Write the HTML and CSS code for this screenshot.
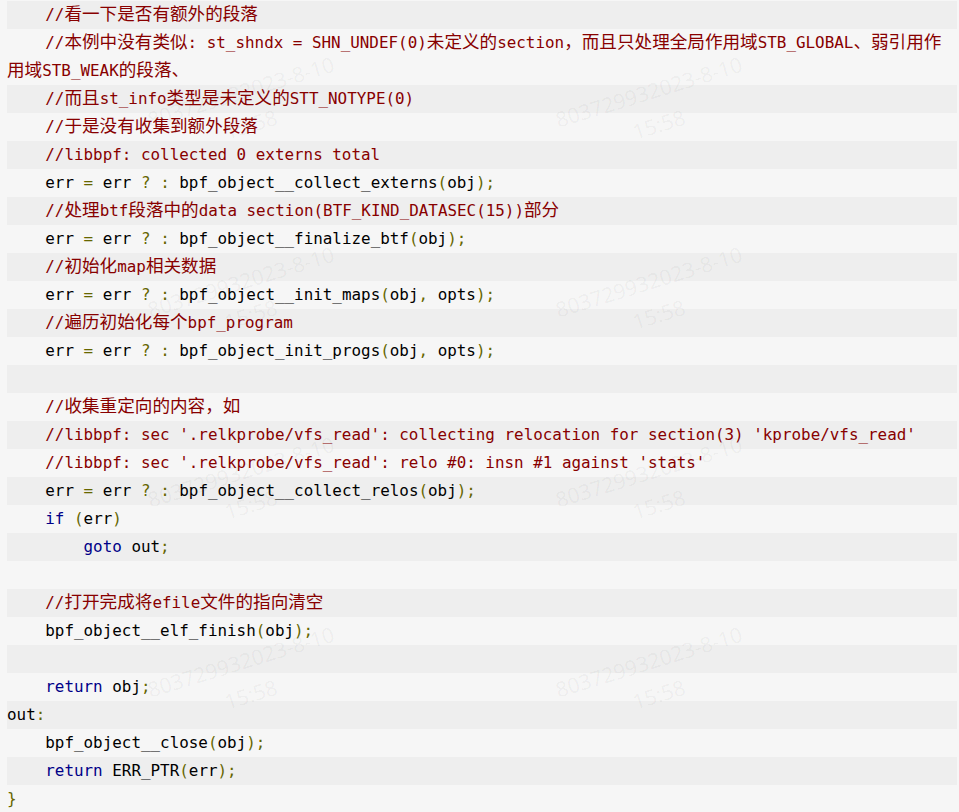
FILE: index.html
```html
<!DOCTYPE html>
<html lang="zh">
<head>
<meta charset="utf-8">
<title>bpf_object__open</title>
<link rel="stylesheet" href="styles.css">
</head>
<body>
<pre class="code"><ol class="lines"><li><span class="c">    //<span class="h">看一下是否有额外的段落</span></span></li><li><span class="c">    //<span class="h">本例中没有类似</span>: st_shndx = SHN_UNDEF(0)<span class="h">未定义的</span>section<span class="h">，而且只处理全局作用域</span>STB_GLOBAL<span class="h">、弱引用作用域</span>STB_WEAK<span class="h">的段落、</span></span></li><li><span class="c">    //<span class="h">而且</span>st_info<span class="h">类型是未定义的</span>STT_NOTYPE(0)</span></li><li><span class="c">    //<span class="h">于是没有收集到额外段落</span></span></li><li><span class="c">    //libbpf: collected 0 externs total</span></li><li>    err <span class="p">=</span> err <span class="p">?</span> <span class="p">:</span> bpf_object__collect_externs<span class="p">(</span>obj<span class="p">);</span></li><li><span class="c">    //<span class="h">处理</span>btf<span class="h">段落中的</span>data section(BTF_KIND_DATASEC(15))<span class="h">部分</span></span></li><li>    err <span class="p">=</span> err <span class="p">?</span> <span class="p">:</span> bpf_object__finalize_btf<span class="p">(</span>obj<span class="p">);</span></li><li><span class="c">    //<span class="h">初始化</span>map<span class="h">相关数据</span></span></li><li>    err <span class="p">=</span> err <span class="p">?</span> <span class="p">:</span> bpf_object__init_maps<span class="p">(</span>obj<span class="p">,</span> opts<span class="p">);</span></li><li><span class="c">    //<span class="h">遍历初始化每个</span>bpf_program</span></li><li>    err <span class="p">=</span> err <span class="p">?</span> <span class="p">:</span> bpf_object_init_progs<span class="p">(</span>obj<span class="p">,</span> opts<span class="p">);</span></li><li> </li><li><span class="c">    //<span class="h">收集重定向的内容，如</span></span></li><li><span class="c">    //libbpf: sec '.relkprobe/vfs_read': collecting relocation for section(3) 'kprobe/vfs_read'</span></li><li><span class="c">    //libbpf: sec '.relkprobe/vfs_read': relo #0: insn #1 against 'stats'</span></li><li>    err <span class="p">=</span> err <span class="p">?</span> <span class="p">:</span> bpf_object__collect_relos<span class="p">(</span>obj<span class="p">);</span></li><li>    <span class="k">if</span> <span class="p">(</span>err<span class="p">)</span></li><li>        <span class="k">goto</span> out<span class="p">;</span></li><li> </li><li><span class="c">    //<span class="h">打开完成将</span>efile<span class="h">文件的指向清空</span></span></li><li>    bpf_object__elf_finish<span class="p">(</span>obj<span class="p">);</span></li><li> </li><li>    <span class="k">return</span> obj<span class="p">;</span></li><li>out<span class="p">:</span></li><li>    bpf_object__close<span class="p">(</span>obj<span class="p">);</span></li><li>    <span class="k">return</span> ERR_PTR<span class="p">(</span>err<span class="p">);</span></li><li><span class="p">}</span></li></ol></pre>
<div class="watermarks" aria-hidden="true">
  <div class="wm"><div class="wm-text">803729932023-8-10<br>15:58</div></div>
  <div class="wm"><div class="wm-text">803729932023-8-10<br>15:58</div></div>
  <div class="wm"><div class="wm-text">803729932023-8-10<br>15:58</div></div>
  <div class="wm"><div class="wm-text">803729932023-8-10<br>15:58</div></div>
  <div class="wm"><div class="wm-text">803729932023-8-10<br>15:58</div></div>
  <div class="wm"><div class="wm-text">803729932023-8-10<br>15:58</div></div>
  <div class="wm"><div class="wm-text">803729932023-8-10<br>15:58</div></div>
  <div class="wm"><div class="wm-text">803729932023-8-10<br>15:58</div></div>
</div>
</body>
</html>
```
FILE: styles.css
```css
html, body {
  margin: 0;
  padding: 0;
  background: #f6f6f6;
}

body {
  position: relative;
  width: 959px;
  height: 812px;
  overflow: hidden;
}

.code {
  margin: 0;
  padding: 1px 2px 0 7px;
  background: #f6f6f6;
  font-family: "DejaVu Sans Mono", "Liberation Mono", monospace;
  font-size: 15.9px;
  line-height: 28px;
  color: #000;
}

.lines {
  list-style: none;
  margin: 0;
  padding: 0;
}

.lines li {
  white-space: pre-wrap;
  line-height: 28px;
  min-height: 28px;
  background: #f6f6f6;
}

.lines li:nth-child(odd) {
  background: #eeeeee;
}

.h {
  font-family: "Noto Sans CJK SC", "Noto Sans CJK JP", sans-serif;
  font-size: 17.6px;
  line-height: 18px;
}

.c { color: #880000; }
.k { color: #000088; }
.p { color: #666600; }

.watermarks {
  position: absolute;
  left: 42px;
  top: 13px;
  display: grid;
  grid-template-columns: repeat(2, 408px);
  grid-template-rows: repeat(4, 190px);
  pointer-events: none;
}

.wm {
  display: flex;
  align-items: center;
  justify-content: center;
}

.wm-text {
  transform: rotate(-17deg);
  text-align: center;
  font-family: "Open Sans", "Noto Sans", sans-serif;
  font-size: 21px;
  line-height: 34px;
  color: rgba(0, 0, 0, 0.05);
  white-space: nowrap;
}
```
